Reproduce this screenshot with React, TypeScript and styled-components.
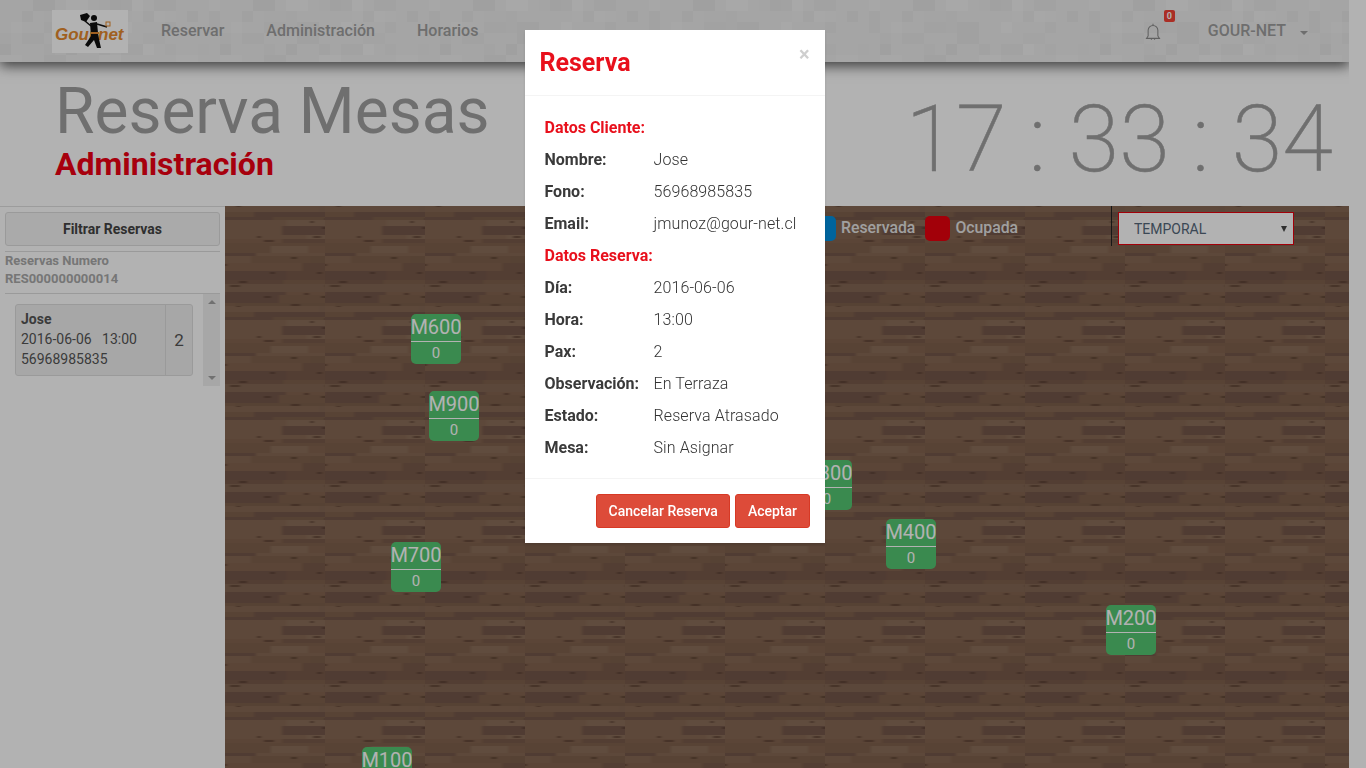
import React from 'react'
import styled, { createGlobalStyle } from 'styled-components'

// small seeded generator so the textures come out the same on every run
const rng = (seed: number) => () => {
  seed = (seed * 1664525 + 1013904223) % 4294967296
  return seed / 4294967296
}

const svgUrl = (w: number, h: number, body: string) =>
  `url("data:image/svg+xml,${encodeURIComponent(
    `<svg xmlns='http://www.w3.org/2000/svg' width='${w}' height='${h}'>${body}</svg>`
  )}")`

const woodTile = () => {
  const r = rng(1234)
  const tones = ['#836450', '#7c5e4c', '#866853', '#785a49', '#8a6e5a', '#7f604d', '#836652', '#73574a']
  let body = `<filter id='b' x='0' y='0' width='100%' height='100%'><feGaussianBlur stdDeviation='1.4 .6'/></filter><rect width='100' height='100' fill='#806250'/><g filter='url(#b)'>`
  let y = -2
  while (y < 102) {
    const h = 3 + Math.floor(r() * 7)
    let x = -Math.floor(r() * 50)
    while (x < 104) {
      const w = 20 + Math.floor(r() * 70)
      const tone = tones[Math.floor(r() * tones.length)]
      body += `<rect x='${x}' y='${y}' width='${w}' height='${h}' fill='${tone}'/>`
      if (r() > 0.55) {
        const kx = x + Math.floor(r() * w)
        body += `<rect x='${kx}' y='${y + 1}' width='${4 + Math.floor(r() * 7)}' height='2' fill='#4e3528' opacity='.55'/>`
      }
      x += w
    }
    y += h
  }
  return svgUrl(100, 100, body + '</g>')
}

const stoneTile = () => {
  const r = rng(31)
  const size = 11
  let body = `<rect width='220' height='220' fill='#ececec'/>`
  for (let row = 0; row < 20; row++) {
    for (let col = 0; col < 20; col++) {
      const v = r()
      if (v < 0.5) continue
      const grey = 230 + Math.floor(r() * 12)
      const span = r() > 0.6 ? 2 : 1
      body += `<rect x='${col * size}' y='${row * size}' width='${size * span}' height='${size}' fill='rgb(${grey},${grey},${grey})'/>`
    }
  }
  return svgUrl(220, 220, body)
}

const GlobalStyle = createGlobalStyle`
  html, body {
    margin: 0;
    height: 768px;
    overflow: hidden;
    background: #fff;
  }
  * {
    box-sizing: border-box;
  }
  body {
    font-family: Roboto, "Liberation Sans", sans-serif;
    color: #333;
  }
`

const Page = styled.div`
  width: 1349px;
  height: 768px;
  overflow: hidden;
  display: flex;
  flex-direction: column;
`

const Navbar = styled.nav`
  position: relative;
  z-index: 2;
  flex: 0 0 62px;
  display: flex;
  align-items: center;
  padding: 0 0 0 52px;
  background-color: #ececec;
  background-image: ${stoneTile()};
  box-shadow: 0 4px 12px rgba(0, 0, 0, 0.65);
`

const LogoBox = styled.div`
  position: relative;
  width: 76px;
  height: 43px;
  background: #fff;
  margin-right: 33px;
  overflow: hidden;
`

const LogoWord = styled.span<{ $left: number }>`
  position: absolute;
  left: ${({ $left }) => $left}px;
  top: 15px;
  font-family: "Liberation Sans", sans-serif;
  font-weight: 700;
  font-style: italic;
  font-size: 17px;
  line-height: 20px;
  color: #e58a2e;
`

const LogoFigure = styled.svg`
  position: absolute;
  left: 27px;
  top: 2px;
`

const NavLinks = styled.div`
  display: flex;
  gap: 42px;
  margin-bottom: 2px;
`

const NavLink = styled.a`
  font-size: 16px;
  font-weight: 500;
  color: #9e9e9e;
`

const NavRight = styled.div`
  margin-left: auto;
  display: flex;
  align-items: center;
  padding-right: 41px;
`

const BellWrap = styled.div`
  position: relative;
  width: 16px;
  height: 17px;
  margin-right: 47px;
  display: flex;
`

const Badge = styled.span`
  position: absolute;
  left: 19px;
  top: -13px;
  width: 11px;
  height: 12px;
  background: #f44336;
  border-radius: 2px;
  color: #fff;
  font-size: 9px;
  font-weight: 700;
  line-height: 12px;
  text-align: center;
`

const UserName = styled.span`
  font-size: 16px;
  font-weight: 500;
  margin-bottom: 2px;
  color: #9e9e9e;
`

const Caret = styled.span`
  margin-left: 14px;
  margin-top: 3px;
  width: 0;
  height: 0;
  border-left: 4px solid transparent;
  border-right: 4px solid transparent;
  border-top: 4px solid #9e9e9e;
`

const TitleRow = styled.header`
  flex: 0 0 144px;
  display: flex;
  justify-content: space-between;
  padding: 15px 16px 0 55px;
`

const TitleBlock = styled.div`
  display: flex;
  flex-direction: column;
`

const Heading = styled.h1`
  margin: 0;
  font-size: 64px;
  line-height: 70px;
  font-weight: 400;
  color: #a0a0a0;
`

const SubHeading = styled.h2`
  margin: 0;
  font-size: 32px;
  line-height: 34px;
  font-weight: 700;
  color: #f00014;
`

const Clock = styled.div`
  margin-top: 8px;
  font-size: 92px;
  line-height: 110px;
  font-weight: 200;
  -webkit-text-stroke: 0.5px #a0a0a0;
  color: #a0a0a0;
  white-space: pre;
`

const Main = styled.main`
  flex: 1;
  display: flex;
  min-height: 0;
`

const Sidebar = styled.aside`
  flex: 0 0 225px;
  border-top: 1px solid #e0e0e0;
  padding: 5px 5px 0;
  display: flex;
  flex-direction: column;
`

const FilterButton = styled.button`
  height: 34px;
  border: 1px solid #ddd;
  border-radius: 3px;
  background: #f4f4f4;
  font-family: inherit;
  font-size: 14px;
  font-weight: 700;
  color: #444;
`

const NumberBlock = styled.div`
  margin-top: 5px;
  padding: 0 0 5px;
  border-top: 1px solid #ddd;
  border-bottom: 1px solid #ddd;
  font-size: 13px;
  font-weight: 700;
  line-height: 18px;
  color: #a9a9a9;
`

const ListArea = styled.div`
  display: flex;
  justify-content: space-between;
  height: 92px;
`

const ReservaCard = styled.div`
  margin: 10px 0 0 10px;
  width: 178px;
  height: 72px;
  display: flex;
  border: 1px solid #ddd;
  border-radius: 3px;
  background: #f0f0f0;
`

const CardInfo = styled.div`
  flex: 1;
  padding: 5px 0 0 5px;
  font-size: 14px;
  line-height: 20px;
  color: #555;
  white-space: pre;
`

const CardName = styled.div`
  font-size: 14px;
  line-height: 19px;
  font-weight: 700;
`

const CardPax = styled.div`
  flex: 0 0 27px;
  border-left: 1px solid #ddd;
  display: flex;
  align-items: center;
  justify-content: center;
  font-size: 17px;
  color: #555;
`

const ScrollTrack = styled.div`
  width: 17px;
  background: #f0f0f0;
  display: flex;
  flex-direction: column;
  justify-content: space-between;
  align-items: center;
  padding: 6px 0;
`

const ScrollArrow = styled.span<{ $down?: boolean }>`
  width: 0;
  height: 0;
  border-left: 4px solid transparent;
  border-right: 4px solid transparent;
  ${({ $down }) => ($down ? 'border-top: 4px solid #a3a3a3;' : 'border-bottom: 4px solid #a3a3a3;')}
`

const Floor = styled.section`
  position: relative;
  flex: 1;
  background-color: #806250;
  background-image: ${woodTile()};
`

const Legend = styled.div`
  position: absolute;
  top: 10px;
  left: 586px;
  display: flex;
  align-items: center;
`

const Swatch = styled.span<{ $color: string }>`
  width: 25px;
  height: 25px;
  border-radius: 5px;
  background: ${({ $color }) => $color};
  margin-right: 5px;
`

const LegendLabel = styled.span`
  font-size: 15.8px;
  font-weight: 500;
  padding-bottom: 3px;
  color: #e6e6e6;
  margin-right: 10px;
`

const SelectWrap = styled.div`
  position: absolute;
  top: 0;
  left: 886px;
  height: 40px;
  padding: 6px 0 0 6px;
  border-left: 1px solid #222;
`

const ZoneSelect = styled.select`
  appearance: none;
  display: block;
  width: 176px;
  height: 33px;
  padding-left: 15px;
  border: 1px solid #e8000e;
  border-radius: 0;
  background: #fff;
  font-family: inherit;
  font-size: 14px;
  color: #55677a;
`

const SelectArrow = styled.span`
  position: absolute;
  left: 169px;
  top: 20px;
  width: 0;
  height: 0;
  border-left: 3px solid transparent;
  border-right: 3px solid transparent;
  border-top: 6px solid #444;
`

const Table = styled.div<{ $x: number; $y: number }>`
  position: absolute;
  left: ${({ $x }) => $x}px;
  top: ${({ $y }) => $y}px;
  width: 50px;
  height: 50px;
  border-radius: 5px;
  background: #53c671;
  color: #fff;
  text-align: center;
`

const TableName = styled.div`
  height: 28px;
  border-bottom: 1px solid #fff;
  font-size: 20px;
  line-height: 27px;
  white-space: nowrap;
  display: flex;
  justify-content: center;
`

const TableCount = styled.div`
  font-size: 15px;
  line-height: 22px;
`

const Backdrop = styled.div`
  position: fixed;
  inset: 0;
  z-index: 10;
  background: rgba(0, 0, 0, 0.3);
`

const DialogWrap = styled.div`
  position: fixed;
  inset: 0;
  z-index: 11;
  padding: 30px 17px 0 0;
  display: flex;
  justify-content: center;
  align-items: flex-start;
`

const Dialog = styled.div`
  width: 300px;
  background: #fff;
  box-shadow: 0 2px 3px rgba(0, 0, 0, 0.12);
`

const DialogHeader = styled.div`
  position: relative;
  height: 66px;
  padding: 19px 15px 0;
  border-bottom: 1px solid #f4f4f4;
`

const DialogTitle = styled.h4`
  margin: 0;
  font-size: 25px;
  line-height: 28px;
  font-weight: 700;
  color: #e8101c;
`

const CloseMark = styled.span`
  position: absolute;
  right: 15px;
  top: 13px;
  font-size: 20px;
  line-height: 22px;
  font-weight: 700;
  color: #cfcfcf;
`

const DialogBody = styled.div`
  height: 382px;
  padding: 15px 20px;
  display: flex;
  flex-direction: column;
`

const SectionTitle = styled.div`
  height: 32px;
  font-size: 16px;
  line-height: 33px;
  font-weight: 700;
  color: #e8101c;
`

const InfoRow = styled.div`
  display: flex;
  height: 32px;
  font-size: 16px;
  line-height: 33px;
`

const InfoLabel = styled.span`
  flex: 0 0 109px;
  font-weight: 700;
  color: #3a3a3a;
`

const InfoValue = styled.span`
  font-weight: 300;
  letter-spacing: 0.1px;
  color: #333;
  white-space: nowrap;
`

const DialogFooter = styled.div`
  display: flex;
  justify-content: flex-end;
  gap: 5px;
  height: 65px;
  padding: 15px;
  border-top: 1px solid #f4f4f4;
`

const DangerButton = styled.button`
  height: 34px;
  padding: 0 11.5px;
  border: 1px solid #d73925;
  border-radius: 3px;
  background: #dd4b39;
  color: #fff;
  font-family: inherit;
  font-size: 14px;
  font-weight: 500;
`

const tables = [
  { name: 'M600', x: 186, y: 108 },
  { name: 'M900', x: 204, y: 185 },
  { name: 'M800', x: 577, y: 254 },
  { name: 'M400', x: 661, y: 313 },
  { name: 'M700', x: 166, y: 336 },
  { name: 'M200', x: 881, y: 399 },
  { name: 'M100', x: 137, y: 541 }
]

const clienteRows = [
  ['Nombre:', 'Jose'],
  ['Fono:', '56968985835'],
  ['Email:', 'jmunoz@gour-net.cl']
]

const reservaRows = [
  ['Día:', '2016-06-06'],
  ['Hora:', '13:00'],
  ['Pax:', '2'],
  ['Observación:', 'En Terraza'],
  ['Estado:', 'Reserva Atrasado'],
  ['Mesa:', 'Sin Asignar']
]

const App = () => {
  return (
    <>
      <GlobalStyle />
      <Page>
        <Navbar>
          <LogoBox>
            <LogoWord $left={3}>Gour</LogoWord>
            <LogoWord $left={46}>net</LogoWord>
            <LogoFigure width="32" height="38" viewBox="0 0 32 38">
              <path d="M1 3 L8 1 L11 4 L7 10 L2 8 Z" fill="#111" />
              <path d="M6 9 L12 14" stroke="#111" strokeWidth="1.5" />
              <circle cx="15" cy="6" r="3" fill="#111" />
              <path d="M11 11 L18 10 L19 21 L20 27 L22 36 L18 36 L15 28 L9 35 L6 33 L12 24 Z" fill="#111" />
              <path d="M18 12 L28 15" stroke="#111" strokeWidth="1.5" />
              <rect x="12" y="20" width="8" height="2" fill="#e58a2e" />
              <rect x="27" y="10" width="4" height="4" fill="none" stroke="#e58a2e" />
            </LogoFigure>
          </LogoBox>
          <NavLinks>
            <NavLink>Reservar</NavLink>
            <NavLink>Administración</NavLink>
            <NavLink>Horarios</NavLink>
          </NavLinks>
          <NavRight>
            <BellWrap>
              <svg width="16" height="17" viewBox="3 1 18 21" fill="none" stroke="#8a8a8a" strokeWidth="1.3">
                <path d="M6 17 V10 a6 6 0 0 1 12 0 V17 L20 20 H4 Z" />
                <path d="M10 21 a2 2 0 0 0 4 0" />
                <path d="M12 2 V4" />
              </svg>
              <Badge>0</Badge>
            </BellWrap>
            <UserName>GOUR-NET</UserName>
            <Caret />
          </NavRight>
        </Navbar>
        <TitleRow>
          <TitleBlock>
            <Heading>Reserva Mesas</Heading>
            <SubHeading>Administración</SubHeading>
          </TitleBlock>
          <Clock>17 : 33 : 34</Clock>
        </TitleRow>
        <Main>
          <Sidebar>
            <FilterButton>Filtrar Reservas</FilterButton>
            <NumberBlock>
              Reservas Numero
              <br />
              RES000000000014
            </NumberBlock>
            <ListArea>
              <ReservaCard>
                <CardInfo>
                  <CardName>Jose</CardName>
                  2016-06-06   13:00
                  <br />
                  56968985835
                </CardInfo>
                <CardPax>2</CardPax>
              </ReservaCard>
              <ScrollTrack>
                <ScrollArrow />
                <ScrollArrow $down />
              </ScrollTrack>
            </ListArea>
          </Sidebar>
          <Floor>
            <Legend>
              <Swatch $color="#0090e0" />
              <LegendLabel>Reservada</LegendLabel>
              <Swatch $color="#e8000e" />
              <LegendLabel>Ocupada</LegendLabel>
            </Legend>
            <SelectWrap>
              <ZoneSelect defaultValue="TEMPORAL">
                <option>TEMPORAL</option>
              </ZoneSelect>
              <SelectArrow />
            </SelectWrap>
            {tables.map(t => (
              <Table key={t.name} $x={t.x} $y={t.y}>
                <TableName>{t.name}</TableName>
                <TableCount>0</TableCount>
              </Table>
            ))}
          </Floor>
        </Main>
      </Page>
      <Backdrop />
      <DialogWrap>
        <Dialog>
          <DialogHeader>
            <DialogTitle>Reserva</DialogTitle>
            <CloseMark>×</CloseMark>
          </DialogHeader>
          <DialogBody>
            <SectionTitle>Datos Cliente:</SectionTitle>
            {clienteRows.map(([label, value]) => (
              <InfoRow key={label}>
                <InfoLabel>{label}</InfoLabel>
                <InfoValue>{value}</InfoValue>
              </InfoRow>
            ))}
            <SectionTitle>Datos Reserva:</SectionTitle>
            {reservaRows.map(([label, value]) => (
              <InfoRow key={label}>
                <InfoLabel>{label}</InfoLabel>
                <InfoValue>{value}</InfoValue>
              </InfoRow>
            ))}
          </DialogBody>
          <DialogFooter>
            <DangerButton>Cancelar Reserva</DangerButton>
            <DangerButton>Aceptar</DangerButton>
          </DialogFooter>
        </Dialog>
      </DialogWrap>
    </>
  )
}

export default App
